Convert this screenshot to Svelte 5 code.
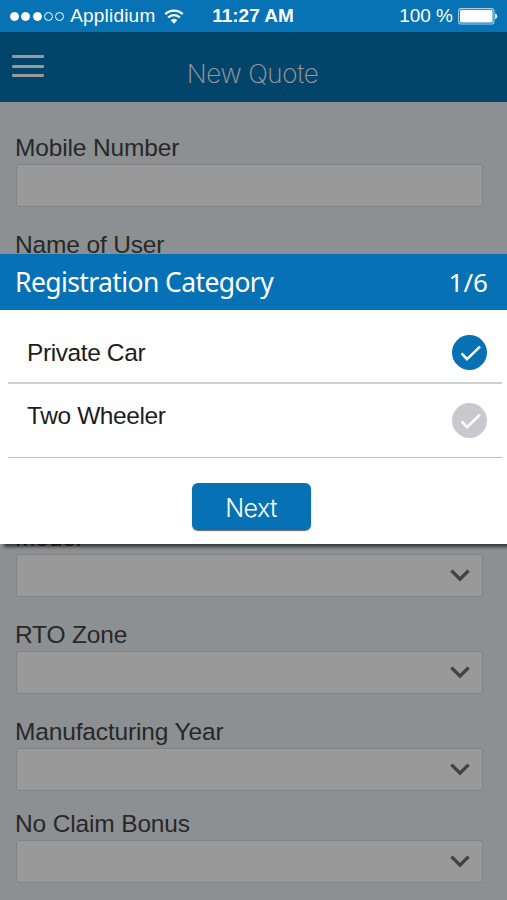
<script lang="ts">
  interface Field {
    name: string;
    label: string;
    select: boolean;
  }

  const fields: Field[] = [
    { name: 'mobile', label: 'Mobile Number', select: false },
    { name: 'user', label: 'Name of User', select: false },
    { name: 'model', label: 'Model', select: true },
    { name: 'rto', label: 'RTO Zone', select: true },
    { name: 'year', label: 'Manufacturing Year', select: true },
    { name: 'bonus', label: 'No Claim Bonus', select: true }
  ];

  const categories = ['Private Car', 'Two Wheeler'];
  const signal = [true, true, true, false, false];

  let selected = $state('Private Car');
</script>

<div class="phone">
  <div class="status-bar">
    <div class="carrier">
      <div class="signal">
        {#each signal as filled}
          <span class="dot" class:filled></span>
        {/each}
      </div>
      <span class="carrier-name">Applidium</span>
      <svg class="wifi" width="20" height="15" viewBox="0 0 20 15">
        <path d="M1.3 5.2A12.4 12.4 0 0 1 18.7 5.2" />
        <path d="M4.2 8.5A8.2 8.2 0 0 1 15.8 8.5" />
        <path class="wifi-base" d="M6.7 11.2A4.7 4.7 0 0 1 13.3 11.2L10 14.8Z" />
      </svg>
    </div>
    <span class="time">11:27 AM</span>
    <div class="power">
      <span>100 %</span>
      <svg width="40" height="17" viewBox="0 0 40 17">
        <rect x="0.6" y="0.6" width="35.4" height="15.4" rx="2.6" fill="none" stroke="#a5d0ec" stroke-width="1.1" />
        <rect x="2" y="2" width="32.6" height="12.6" rx="1.4" fill="#fff" />
        <path d="M37.2 5.3Q39.2 6.4 39.2 8.3T37.2 11.3Z" fill="#fff" />
      </svg>
    </div>
  </div>

  <main class="screen">
    <header class="nav">
      <button class="menu" aria-label="Menu">
        <span></span>
        <span></span>
        <span></span>
      </button>
      <h1>New Quote</h1>
    </header>

    <form class="quote-form">
      {#each fields as field}
        <div class="field {field.name}">
          <label for={field.name}>{field.label}</label>
          <div class="control" id={field.name}>
            {#if field.select}
              <svg width="20" height="13" viewBox="0 0 20 13">
                <path d="M1.4 1.6L10 10.2L18.6 1.6" />
              </svg>
            {/if}
          </div>
        </div>
      {/each}
    </form>

    <!-- Dimmed layer with the first step of the wizard -->
    <div class="overlay">
      <section class="dialog">
        <div class="dialog-header">
          <h2>Registration Category</h2>
          <span class="step">1/6</span>
        </div>
        <ul>
          {#each categories as category}
            <li>
              <span class="category">{category}</span>
              <button
                class="check"
                class:active={selected === category}
                aria-label={category}
                onclick={() => (selected = category)}
              >
                <svg width="35" height="35" viewBox="0 0 35 35">
                  <path d="M9.6 18.4L15 24.2L28 11.7" />
                </svg>
              </button>
            </li>
          {/each}
        </ul>
        <button class="next">Next</button>
      </section>
    </div>
  </main>
</div>

<style>
  :global(body) {
    margin: 0;
  }
  .phone {
    display: flex;
    flex-direction: column;
    width: 507px;
    height: 900px;
    overflow: hidden;
    font-family: 'Liberation Sans', Arial, sans-serif;
  }
  button {
    padding: 0;
    border: none;
    font: inherit;
    cursor: pointer;
  }
  h1, h2 {
    margin: 0;
    font-weight: normal;
  }

  /* Status bar */
  .status-bar {
    display: grid;
    grid-template-columns: 1fr auto 1fr;
    align-items: center;
    height: 32px;
    padding: 0 9px 0 10px;
    box-sizing: border-box;
    background: #0773b5;
    color: #fff;
    font-size: 19px;
    line-height: 32px;
  }
  .carrier, .power, .signal {
    display: flex;
    align-items: center;
  }
  .signal {
    gap: 2.3px;
    margin-right: 6px;
  }
  .dot {
    width: 9px;
    height: 9px;
    border: 1px solid #fff;
    border-radius: 50%;
    box-sizing: border-box;
  }
  .dot.filled {
    background: #fff;
  }
  .carrier-name {
    letter-spacing: 0.2px;
  }
  .wifi {
    margin-left: 9px;
  }
  .wifi path {
    fill: none;
    stroke: #fff;
    stroke-width: 2.4;
  }
  .wifi .wifi-base {
    fill: #fff;
    stroke: none;
  }
  .time {
    margin-right: 2px;
    font-weight: bold;
  }
  .power {
    justify-content: flex-end;
    gap: 5px;
  }

  /* Screen below the status bar */
  .screen {
    position: relative;
    flex: 1;
    background: #e9f0f3;
  }
  .nav {
    display: grid;
    grid-template-columns: 1fr auto 1fr;
    height: 70px;
    padding: 0 14px 0 12px;
    box-sizing: border-box;
    background: #0573b1;
  }
  .menu {
    display: flex;
    flex-direction: column;
    gap: 6.5px;
    width: 32px;
    height: 24px;
    margin-top: 23px;
    background: none;
  }
  .menu span {
    height: 3px;
    border-radius: 1px;
    background: #fff;
  }
  h1 {
    color: #fff;
    font-family: Inter, 'Liberation Sans', sans-serif;
    font-size: 26px;
    font-weight: 200;
    line-height: 83px;
    letter-spacing: -0.35px;
  }

  .quote-form {
    padding: 30px 24px 0 15px;
  }
  .field {
    height: 97px;
  }
  .field.user {
    height: 293px;
  }
  .field.year {
    height: 92px;
  }
  label {
    display: block;
    height: 32px;
    color: #444;
    font-size: 24.5px;
    line-height: 31px;
    letter-spacing: -0.15px;
  }
  .control {
    display: flex;
    align-items: center;
    justify-content: flex-end;
    height: 43px;
    margin-left: 1px;
    padding-right: 12px;
    box-sizing: border-box;
    border: 1px solid #d9dbdc;
    border-radius: 3px;
    background: #fff;
  }
  .control path {
    fill: none;
    stroke: #6e6e6e;
    stroke-width: 3.4;
  }

  /* Dialog */
  .overlay {
    position: absolute;
    inset: 0;
    padding-top: 222px;
    background: rgba(0, 0, 0, 0.4);
  }
  .dialog {
    display: flex;
    flex-direction: column;
    height: 290px;
    background: #fff;
    box-shadow: 4px 3px 3px rgba(0, 0, 0, 0.6);
  }
  .dialog-header {
    display: flex;
    justify-content: space-between;
    height: 56px;
    padding: 0 19px 0 15px;
    background: #0672b5;
    color: #fff;
    font-family: 'Noto Sans', 'Open Sans', sans-serif;
    font-size: 26px;
    line-height: 56px;
  }
  h2 {
    font-size: 26.5px;
    letter-spacing: -0.6px;
  }
  ul {
    margin: 0;
    padding: 0 5px 0 8px;
    list-style: none;
  }
  li {
    display: flex;
    justify-content: space-between;
    height: 72px;
    padding: 0 15px 0 19px;
    border-bottom: 2px solid #d0d0d1;
  }
  li:last-child {
    height: 73px;
    border-bottom: 1px solid #bdbdbd;
  }
  .category {
    color: #1d1d1d;
    font-size: 24.5px;
    line-height: 85px;
    letter-spacing: -0.4px;
  }
  li:last-child .category {
    line-height: 63px;
  }
  .check {
    width: 35px;
    height: 35px;
    margin-top: 25px;
    border-radius: 50%;
    background: #c9c8ce;
  }
  li:last-child .check {
    margin-top: 19px;
  }
  .check.active {
    background: #0672b5;
  }
  .check svg {
    display: block;
  }
  .check path {
    fill: none;
    stroke: #fff;
    stroke-width: 2.5;
  }
  .next {
    align-self: center;
    width: 119px;
    height: 47px;
    margin: 25px 5px 0 0;
    border-radius: 6px;
    background: #0672b5;
    box-shadow: 0 1px 1px rgba(0, 0, 0, 0.6);
    color: #fff;
    font-family: Inter, 'Liberation Sans', sans-serif;
    font-size: 25px;
    font-weight: 300;
    line-height: 50px;
    letter-spacing: -0.6px;
  }
</style>
